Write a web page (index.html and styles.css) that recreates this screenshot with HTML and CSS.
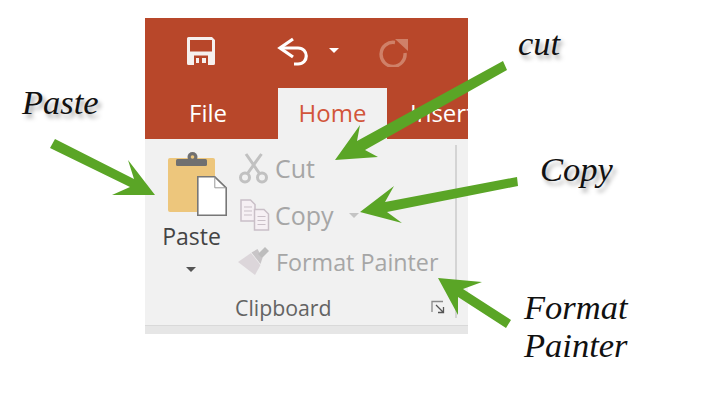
FILE: index.html
```html
<!DOCTYPE html>
<html lang="en">
<head>
<meta charset="utf-8">
<title>Clipboard group</title>
<link rel="stylesheet" href="styles.css">
</head>
<body>
<div class="canvas">
  <div class="ribbon">
    <div class="titlebar">
      <div class="qat">
        <svg class="ic-save" width="28" height="28" viewBox="0 0 28 28"><path d="M1.500 0H25l3 3v23.500a1.500 1.500 0 0 1-1.500 1.500h-25A1.500 1.500 0 0 1 0 26.500v-25A1.500 1.500 0 0 1 1.500 0z" fill="#f6f0ee"/><path d="M3 3h22v11.500H3z" fill="#b8472a"/><path d="M7 18.500h14V28H7z" fill="#b8472a"/><path d="M9 21h3v5H9zM15 21h4v5h-4z" fill="#f6f0ee"/></svg>
        <svg class="ic-undo" width="32" height="30" viewBox="0 0 32 30"><path d="M16 2L3 11l13 9" fill="none" stroke="#fff" stroke-width="3.200"/><path d="M4 11h17c11 0 11 16 0 16h-4" fill="none" stroke="#fff" stroke-width="3.200"/></svg>
        <span class="caret caret-white"></span>
        <svg class="ic-redo" width="31" height="30" viewBox="0 0 31 30"><path d="M17 5.500A12 12 0 1 0 27 16" fill="none" stroke="#cf8068" stroke-width="3.400"/><path d="M17 2h13v12z" fill="#cf8068"/></svg>
      </div>
      <div class="tabs">
        <span class="tab tab-file">File</span>
        <span class="tab tab-active">Home</span>
        <span class="tab tab-clip">Insert</span>
      </div>
    </div>
    <div class="body">
      <div class="group">
        <div class="tools">
          <div class="paste">
            <svg class="ic-paste" width="60" height="65" viewBox="0 0 60 65"><rect x="0" y="6" width="47" height="54" rx="2" fill="#edc67c"/><circle cx="24.500" cy="5" r="5" fill="#707070"/><circle cx="24.500" cy="5" r="1.800" fill="#edc67c"/><rect x="8" y="7" width="31" height="7" rx="1.500" fill="#707070"/><path d="M29.800 24.800h17l11.400 11V63.200H29.800z" fill="#fff" stroke="#777" stroke-width="1.600"/><path d="M46.800 24.800V35.800h11.400" fill="none" stroke="#999"/></svg>
            <span class="paste-label">Paste</span>
            <span class="caret caret-dark"></span>
          </div>
          <div class="rows">
            <div class="row row-cut">
              <svg width="30" height="32" viewBox="0 0 30 32"><g fill="none" stroke="#c1c1c1" stroke-width="3"><circle cx="7" cy="25.500" r="4.500"/><circle cx="24" cy="25.500" r="4.500"/><path d="M9.500 21.500L23.500 2M21.500 21.500L8 2"/></g></svg>
              <span class="label-big">Cut</span>
            </div>
            <div class="row row-copy">
              <svg width="32" height="32" viewBox="0 0 32 32"><g fill="#f6f0f4" stroke="#c9bfc7" stroke-width="1.500"><path d="M3 1h9.500L17 5.500V22H3z"/><path d="M16.500 10.500H26l4.500 4.500V31h-14z"/></g><path d="M6 8h8M6 12h8M6 16h8M19.500 17.500h8M19.500 21.500h8M19.500 25.500h8" stroke="#c9bfc7"/></svg>
              <span class="label-big">Copy</span>
              <span class="caret caret-grey"></span>
            </div>
            <div class="row row-painter">
              <svg width="33" height="32" viewBox="0 0 33 32"><path d="M0 16l13-9 9.500 12L17 29z" fill="#dcd6da"/><path d="M13.500 6.500l6-3.500 5 9-2 6z" fill="#c8c5c7"/><path d="M20 8l7-7 4 4-7 7z" fill="#bdbdbd"/></svg>
              <span>Format Painter</span>
            </div>
          </div>
        </div>
        <div class="group-foot">
          <span class="group-name">Clipboard</span>
          <svg class="launcher" width="14" height="14" viewBox="0 0 14 14"><path d="M1 12V1.500h11" fill="none" stroke="#8a8a8a" stroke-width="1.300"/><path d="M5 5l7 7M12.500 7v5.500H7" fill="none" stroke="#555" stroke-width="1.300"/></svg>
        </div>
      </div>
      <div class="sep"></div>
    </div>
    <div class="strip"></div>
  </div>

  <svg class="arrows" width="709" height="417" viewBox="0 0 709 417">
    <g fill="#5aa526">
      <path d="M55 139L134 179L128 160L155 195H112L130 187L50 148Z"/>
      <path d="M503 61L357 141L360 125L335 160L378 157L365 150L507 70Z"/>
      <path d="M517 177L385 202L394 186L360 212L402 223L387 212L518 186Z"/>
      <path d="M438 278L482 282L463 289L511 320L506 328L458 297V315Z"/>
    </g>
  </svg>
  <span class="note note-shadow note-paste">Paste</span>
  <span class="note note-shadow note-cut">cut</span>
  <span class="note note-shadow note-copy">Copy</span>
  <span class="note note-format">Format<br>Painter</span>
</div>
</body>
</html>
```
FILE: styles.css
```css
* { box-sizing: border-box; }
html, body { margin: 0; padding: 0; background: #fff; }
.canvas { position: relative; width: 709px; height: 417px; overflow: hidden; padding: 18px 0 0 145px; font-family: "Open Sans", sans-serif; }
.ribbon { width: 323px; height: 316px; display: flex; flex-direction: column; background: #f1f1f1; }
.titlebar { height: 121px; flex: none; background: #b8472a; display: flex; flex-direction: column; justify-content: space-between; }
.qat { display: flex; align-items: flex-start; padding: 19px 0 0 42px; }
.ic-save { margin-right: 62px; }
.ic-undo { margin-right: 20px; }
.ic-redo { margin-left: 39px; }
.tabs { display: flex; height: 51px; overflow: hidden; color: #fff; font-size: 24px; }
.tab { display: flex; align-items: center; justify-content: center; padding-bottom: 2px; }
.tab-file { width: 133px; padding-right: 7px; }
.tab-active { width: 109px; background: #f1f1f1; color: #d2553a; }
.tab-clip { width: 81px; justify-content: flex-start; padding-left: 23px; white-space: nowrap; }
.caret { display: block; flex: none; width: 0; height: 0; border-left: 5px solid transparent; border-right: 5px solid transparent; border-top: 5px solid; }
.caret-white { border-top-color: #fff; margin-top: 11px; }
.caret-dark { border-top-color: #555; margin-right: 1px; }
.caret-grey { border-top-color: #c4c4c4; margin: 1px 0 0 15px; }
.body { flex: 1; display: flex; min-height: 0; }
.group { width: 310px; display: flex; flex-direction: column; }
.tools { flex: 1; display: flex; min-height: 0; }
.paste { width: 93px; flex: none; display: flex; flex-direction: column; align-items: center; padding-top: 13px; }
.ic-paste { align-self: flex-start; margin-left: 23px; flex: none; }
.paste-label { font-size: 23px; line-height: 28px; color: #444; margin-top: 5px; }
.paste .caret { margin-top: 17px; }
.rows { display: flex; flex-direction: column; color: #a6a6a6; font-size: 23.300px; padding-top: 5px; }
.row { display: flex; align-items: center; white-space: nowrap; height: 47px; }
.row svg { flex: none; margin-bottom: -1px; }
.row-cut svg { margin-right: 7px; }
.row-copy svg { margin-right: 5px; }
.row-painter svg { margin-right: 5px; }
.label-big { font-size: 25px; }
.group-foot { height: 34px; flex: none; display: flex; align-items: center; justify-content: space-between; padding: 0 10px 2px 90px; }
.group-name { font-size: 21.300px; color: #636363; }
.sep { width: 2px; height: 173px; background: #d4d4d4; margin-top: 6px; }
.strip { height: 9px; flex: none; background: #e6e6e6; border-top: 1px solid #d9d9d9; }
.arrows { position: absolute; left: 0; top: 0; }
.note { position: absolute; font-family: "Liberation Serif", serif; font-style: italic; font-size: 34.500px; line-height: 38px; color: #111; }
.note-shadow { text-shadow: 3px 4px 4px #aaa; }
.note-paste { left: 22px; top: 83px; }
.note-cut { left: 518px; top: 24px; }
.note-copy { left: 540px; top: 150px; }
.note-format { left: 524px; top: 288px; }
```
